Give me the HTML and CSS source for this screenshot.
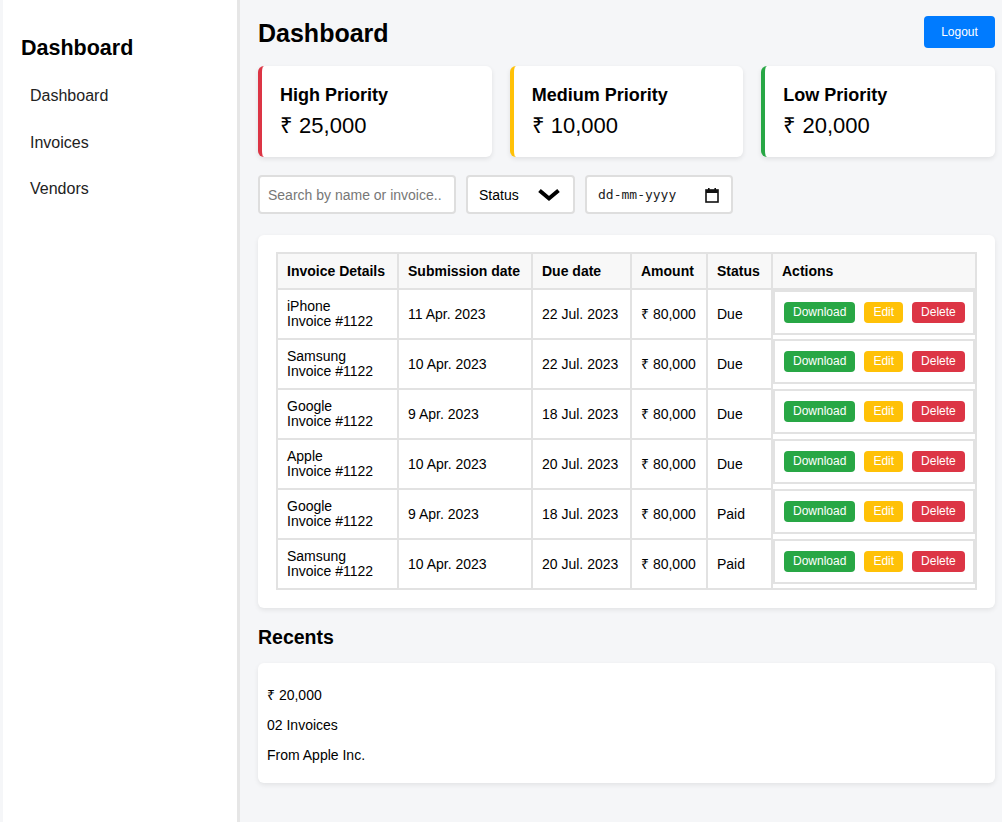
FILE: index.html
```html
<!DOCTYPE html>
<html lang="en">
<head>
<meta charset="utf-8">
<title>Dashboard</title>
<link rel="stylesheet" href="styles.css">
</head>
<body>
<aside class="sidebar">
  <h2 class="brand">Dashboard</h2>
  <nav class="nav">
    <a href="#">Dashboard</a>
    <a href="#">Invoices</a>
    <a href="#">Vendors</a>
  </nav>
</aside>
<main class="main">
  <header class="topbar">
    <h1>Dashboard</h1>
    <button class="logout">Logout</button>
  </header>

  <section class="cards">
    <div class="card card-high">
      <div class="card-title">High Priority</div>
      <div class="card-value">₹ 25,000</div>
    </div>
    <div class="card card-medium">
      <div class="card-title">Medium Priority</div>
      <div class="card-value">₹ 10,000</div>
    </div>
    <div class="card card-low">
      <div class="card-title">Low Priority</div>
      <div class="card-value">₹ 20,000</div>
    </div>
  </section>

  <section class="filters">
    <input class="field search" type="text" placeholder="Search by name or invoice..">
    <div class="field select">
      <span>Status</span>
      <svg width="24" height="14" viewBox="0 0 24 14"><polyline points="2.5,2.5 12,10.5 21.5,2.5" fill="none" stroke="#000" stroke-width="4" stroke-linejoin="miter"/></svg>
    </div>
    <div class="field date">
      <span>dd-mm-yyyy</span>
      <svg width="14" height="16" viewBox="0 0 14 16"><rect x="1" y="3" width="12" height="12" fill="none" stroke="#111" stroke-width="1.6"/><rect x="1" y="3" width="12" height="3" fill="#111"/><rect x="3" y="1" width="1.6" height="3" fill="#111"/><rect x="9.4" y="1" width="1.6" height="3" fill="#111"/></svg>
    </div>
  </section>

  <section class="panel">
    <table class="invoices">
      <thead>
        <tr>
          <th class="c-details">Invoice Details</th>
          <th class="c-sub">Submission date</th>
          <th class="c-due">Due date</th>
          <th class="c-amt">Amount</th>
          <th class="c-status">Status</th>
          <th class="c-actions">Actions</th>
        </tr>
      </thead>
      <tbody>
        <tr>
          <td>iPhone<br>Invoice #1122</td><td>11 Apr. 2023</td><td>22 Jul. 2023</td><td>₹ 80,000</td><td>Due</td>
          <td class="actions"><button class="btn btn-green">Download</button><button class="btn btn-yellow">Edit</button><button class="btn btn-red">Delete</button></td>
        </tr>
        <tr>
          <td>Samsung<br>Invoice #1122</td><td>10 Apr. 2023</td><td>22 Jul. 2023</td><td>₹ 80,000</td><td>Due</td>
          <td class="actions"><button class="btn btn-green">Download</button><button class="btn btn-yellow">Edit</button><button class="btn btn-red">Delete</button></td>
        </tr>
        <tr>
          <td>Google<br>Invoice #1122</td><td>9 Apr. 2023</td><td>18 Jul. 2023</td><td>₹ 80,000</td><td>Due</td>
          <td class="actions"><button class="btn btn-green">Download</button><button class="btn btn-yellow">Edit</button><button class="btn btn-red">Delete</button></td>
        </tr>
        <tr>
          <td>Apple<br>Invoice #1122</td><td>10 Apr. 2023</td><td>20 Jul. 2023</td><td>₹ 80,000</td><td>Due</td>
          <td class="actions"><button class="btn btn-green">Download</button><button class="btn btn-yellow">Edit</button><button class="btn btn-red">Delete</button></td>
        </tr>
        <tr>
          <td>Google<br>Invoice #1122</td><td>9 Apr. 2023</td><td>18 Jul. 2023</td><td>₹ 80,000</td><td>Paid</td>
          <td class="actions"><button class="btn btn-green">Download</button><button class="btn btn-yellow">Edit</button><button class="btn btn-red">Delete</button></td>
        </tr>
        <tr>
          <td>Samsung<br>Invoice #1122</td><td>10 Apr. 2023</td><td>20 Jul. 2023</td><td>₹ 80,000</td><td>Paid</td>
          <td class="actions"><button class="btn btn-green">Download</button><button class="btn btn-yellow">Edit</button><button class="btn btn-red">Delete</button></td>
        </tr>
      </tbody>
    </table>
  </section>

  <h2 class="section-title">Recents</h2>
  <section class="recents">
    <p>₹ 20,000</p>
    <p>02 Invoices</p>
    <p>From Apple Inc.</p>
  </section>
</main>
</body>
</html>
```

FILE: styles.css
```css
* { box-sizing: border-box; }

html, body {
  margin: 0;
  padding: 0;
}

body {
  font-family: "Liberation Sans", Arial, sans-serif;
  background: #f5f6f8;
  color: #000;
  display: flex;
  min-height: 100vh;
}

/* Sidebar */
.sidebar {
  width: 237px;
  margin-left: 3px;
  flex: 0 0 auto;
  background: #fff;
  border-right: 3px solid #e6e6e6;
  padding: 35px 18px 20px 18px;
  min-height: 822px;
}

.brand {
  margin: 0;
  font-size: 21.5px;
  line-height: 26px;
  font-weight: bold;
}

.nav {
  display: flex;
  flex-direction: column;
  margin-top: 12px;
}

.nav a {
  display: block;
  padding: 14px 9px;
  line-height: 18.5px;
  font-size: 16px;
  color: #222;
  text-decoration: none;
}

/* Main */
.main {
  flex: 1 1 auto;
  min-width: 0;
  padding: 16px 7px 20px 18px;
  display: flex;
  flex-direction: column;
}

.topbar {
  display: flex;
  align-items: center;
  justify-content: space-between;
  height: 32px;
}

.topbar h1 {
  margin: 0;
  padding-top: 2px;
  font-size: 25px;
  line-height: 30px;
  font-weight: bold;
}

.logout {
  background: #007bff;
  color: #fff;
  border: none;
  border-radius: 4px;
  height: 32px;
  width: 71px;
  padding: 0;
  font-family: "Liberation Sans", Arial, sans-serif;
  font-size: 12px;
  cursor: pointer;
}

/* Cards */
.cards {
  display: flex;
  gap: 18px;
  margin-top: 18px;
}

.card {
  flex: 1 1 0;
  background: #fff;
  border-radius: 6px;
  box-shadow: 0 2px 5px rgba(0, 0, 0, 0.09);
  border-left: 4px solid;
  padding: 18.5px 18px 16px 18px;
  height: 91px;
}

.card-high { border-left-color: #dc3545; }
.card-medium { border-left-color: #ffc107; }
.card-low { border-left-color: #28a745; }

.card-title {
  font-size: 18px;
  font-weight: bold;
  line-height: 21px;
}

.card-value {
  font-size: 22px;
  line-height: 26px;
  margin-top: 7px;
}

/* Filters */
.filters {
  display: flex;
  gap: 10px;
  margin-top: 18px;
}

.field {
  height: 39px;
  border: 2px solid #dedede;
  border-radius: 4px;
  background: #fff;
  font-family: "Liberation Sans", Arial, sans-serif;
  font-size: 14px;
  color: #000;
}

.search {
  width: 198px;
  padding: 0 8px;
  outline: none;
}

.search::placeholder {
  color: #777;
}

.select {
  width: 109px;
  display: flex;
  align-items: center;
  justify-content: space-between;
  padding: 0 12px 0 11px;
}

.date {
  width: 148px;
  display: flex;
  align-items: center;
  justify-content: space-between;
  padding: 0 12px 0 11px;
  font-family: "DejaVu Sans Mono", "Liberation Mono", monospace;
  font-size: 13px;
  color: #222;
}

/* Table panel */
.panel {
  margin-top: 21px;
  background: #fff;
  border-radius: 6px;
  box-shadow: 0 2px 5px rgba(0, 0, 0, 0.08);
  padding: 17px 18px 18px 18px;
}

.invoices {
  width: 100%;
  border-collapse: collapse;
  table-layout: fixed;
  border: 2px solid #e2e2e2;
  font-size: 14px;
}

.invoices th,
.invoices td {
  border: 2px solid #e2e2e2;
  text-align: left;
  vertical-align: middle;
  padding: 9px 9px;
  line-height: 15px;
}

.invoices th {
  background: #f8f8f8;
  font-weight: bold;
  padding: 9px 9px;
  line-height: 16px;
}

.c-details { width: 121px; }
.c-sub { width: 134px; }
.c-due { width: 99px; }
.c-amt { width: 76px; }
.c-status { width: 65px; }

.invoices td.actions {
  display: flex;
  align-items: center;
  gap: 9px;
  padding: 10px 9px;
}

.btn {
  height: 21px;
  border: none;
  border-radius: 4px;
  padding: 0 9px;
  color: #fff;
  font-family: "Liberation Sans", Arial, sans-serif;
  font-size: 12px;
  line-height: 21px;
  cursor: pointer;
}

.btn-green { background: #28a745; }
.btn-yellow { background: #ffc107; }
.btn-red { background: #dc3545; }

/* Recents */
.section-title {
  margin: 17px 0 0 0;
  font-size: 19.5px;
  line-height: 24px;
  font-weight: bold;
}

.recents {
  margin-top: 14px;
  background: #fff;
  border-radius: 6px;
  box-shadow: 0 2px 5px rgba(0, 0, 0, 0.08);
  padding: 10px 9px 6px 9px;
  font-size: 14px;
}

.recents p {
  margin: 14px 0;
  line-height: 16px;
}
```
